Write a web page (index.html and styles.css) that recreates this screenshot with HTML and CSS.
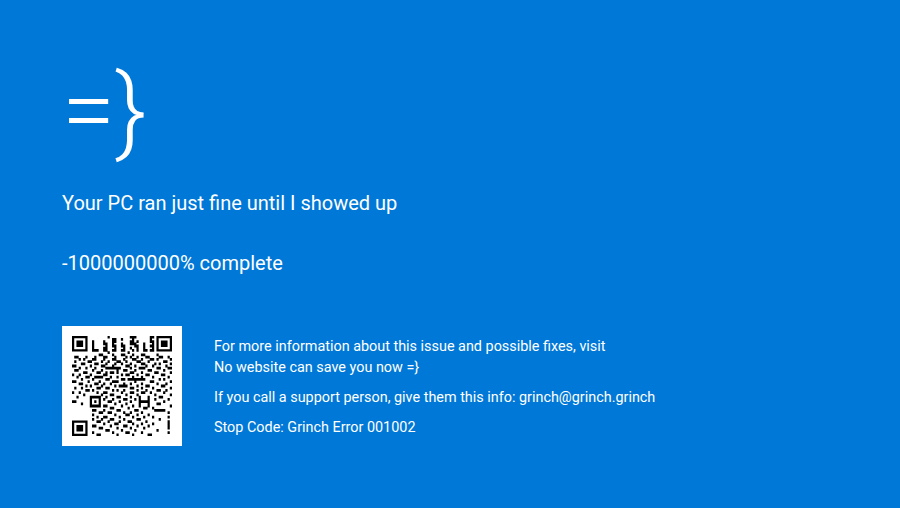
FILE: index.html
```html
<!DOCTYPE html>
<html lang="en">
<head>
    <meta charset="UTF-8">
    <meta name="viewport" content="width=device-width, initial-scale=1.0">
    <title>Grinch Error</title>
    <link rel="stylesheet" href="styles.css">
</head>
<body>
    <main class="screen">
        <div class="logo">=}</div>
        <p class="lead">Your PC ran just fine until I showed up</p>
        <p class="lead progress">-1000000000% complete</p>

        <div class="details">
            <div class="qr">
                <svg viewBox="0 0 45 45" width="100" height="100">
                    <path class="qr-finder" d="M.5 .5h6v6h-6zM38.5 .5h6v6h-6zM.5 38.5h6v6h-6z"/>
                    <path class="qr-eye" d="M2 2h3v3h-3zM40 2h3v3h-3zM2 40h3v3h-3z"/>
                    <path class="qr-data" d="
                        M16 .5h1M26 .5h3M35 .5h2
                        M18 1.5h2M22 1.5h1M27 1.5h1M35 1.5h1
                        M9 2.5h1M14 2.5h1M18 2.5h2M26 2.5h2M29 2.5h1M35 2.5h2
                        M9 3.5h1M14 3.5h2M18 3.5h1M22 3.5h1M26 3.5h3M32 3.5h1M36 3.5h1
                        M9 4.5h1M15 4.5h1M18 4.5h2M22 4.5h2M28 4.5h2M32 4.5h1M35 4.5h2
                        M9 5.5h1M14 5.5h2M19 5.5h1M23 5.5h1M26 5.5h1M29 5.5h1M32 5.5h1M36 5.5h1
                        M9 6.5h3M14 6.5h2M18 6.5h2M22 6.5h2M27 6.5h1M29 6.5h1M32 6.5h2M35 6.5h2
                        M16 7.5h1M25 7.5h1
                        M12 8.5h2M18 8.5h1M22 8.5h2M27 8.5h1M31 8.5h2M38 8.5h1
                        M1 9.5h2M6 9.5h1M10 9.5h1M14 9.5h2M19 9.5h1M24 9.5h1M26 9.5h1M29 9.5h1M33 9.5h2M39 9.5h2M43 9.5h1
                        M3 10.5h1M5 10.5h1M9 10.5h2M14 10.5h1M18 10.5h2M23 10.5h1M27 10.5h2M31 10.5h1M35 10.5h2M38 10.5h1M44 10.5h1
                        M1 11.5h1M7 11.5h2M13 11.5h1M16 11.5h1M20 11.5h2M24 11.5h1M29 11.5h2M34 11.5h1M41 11.5h2
                        M4 12.5h2M10 12.5h2M15 12.5h1M19 12.5h1M22 12.5h1M26 12.5h1M31 12.5h2M37 12.5h1M39 12.5h1M44 12.5h1
                        M0 13.5h2M8 13.5h1M13 13.5h2M18 13.5h1M24 13.5h2M28 13.5h1M33 13.5h1M36 13.5h1M42 13.5h1
                        M3 14.5h1M6 14.5h1M10 14.5h1M15 14.5h7M26 14.5h1M30 14.5h3M38 14.5h2M43 14.5h2
                        M1 15.5h2M9 15.5h1M13 15.5h1M20 15.5h1M23 15.5h2M28 15.5h1M34 15.5h2M41 15.5h1
                        M5 16.5h2M11 16.5h2M15 16.5h1M17 16.5h2M20 16.5h1M26 16.5h2M31 16.5h1M37 16.5h2M44 16.5h1
                        M0 17.5h1M3 17.5h1M8 17.5h1M14 17.5h2M22 17.5h1M24 17.5h2M29 17.5h1M33 17.5h2M40 17.5h2
                        M2 18.5h1M6 18.5h2M10 18.5h4M17 18.5h1M20 18.5h1M27 18.5h1M31 18.5h1M36 18.5h1M43 18.5h1
                        M4 19.5h1M9 19.5h1M15 19.5h2M22 19.5h2M25 19.5h8M39 19.5h1M41 19.5h1
                        M0 20.5h2M7 20.5h1M12 20.5h1M18 20.5h3M28 20.5h1M35 20.5h2M44 20.5h1
                        M3 21.5h2M10 21.5h2M14 21.5h1M17 21.5h1M23 21.5h1M26 21.5h1M31 21.5h1M38 21.5h1M42 21.5h1
                        M6 22.5h1M8 22.5h1M13 22.5h1M19 22.5h1M21 22.5h4M29 22.5h1M33 22.5h2M40 22.5h2
                        M1 23.5h1M4 23.5h1M11 23.5h2M15 23.5h2M26 23.5h2M31 23.5h1M36 23.5h1M44 23.5h1
                        M6 24.5h2M9 24.5h1M18 24.5h1M20 24.5h1M23 24.5h1M29 24.5h1M33 24.5h1M38 24.5h2M42 24.5h1
                        M0 25.5h1M3 25.5h1M11 25.5h1M14 25.5h2M22 25.5h1M26 25.5h2M31 25.5h2M35 25.5h1M41 25.5h1
                        M5 26.5h1M13 26.5h1M17 26.5h2M24 26.5h1M29 26.5h1M37 26.5h1M44 26.5h1
                        M2 27.5h1M8 27.5h5M15 27.5h1M20 27.5h2M26 27.5h1M30 27.5h1M34 27.5h1M39 27.5h2
                        M8 28.5h1M12 28.5h1M14 28.5h1M18 28.5h1M23 28.5h2M28 28.5h1M30 28.5h1M34 28.5h1M37 28.5h1M43 28.5h1
                        M0 29.5h2M8 29.5h1M10 29.5h1M12 29.5h1M16 29.5h2M21 29.5h1M26 29.5h1M30 29.5h5M41 29.5h1
                        M4 30.5h1M8 30.5h1M12 30.5h1M19 30.5h1M24 30.5h1M30 30.5h1M34 30.5h1M38 30.5h2
                        M8 31.5h5M14 31.5h2M22 31.5h1M27 31.5h1M30 31.5h1M34 31.5h1M44 31.5h1
                        M17 32.5h2M25 32.5h1M32 32.5h2M36 32.5h1
                        M9 33.5h2M14 33.5h1M20 33.5h2M28 33.5h2M37 33.5h5
                        M12 34.5h2M16 34.5h2M23 34.5h1M26 34.5h1M31 34.5h1M43 34.5h1
                        M9 35.5h1M19 35.5h1M24 35.5h2M29 35.5h1M34 35.5h1
                        M11 36.5h1M14 36.5h2M21 36.5h1M27 36.5h1M32 36.5h1M36 36.5h1M43 36.5h1
                        M9 37.5h1M13 37.5h1M17 37.5h2M23 37.5h1M29 37.5h2M39 37.5h1
                        M11 38.5h2M16 38.5h1M21 38.5h1M25 38.5h2M33 38.5h1M43 38.5h1
                        M14 39.5h1M19 39.5h2M27 39.5h1M31 39.5h1M36 39.5h1M43 39.5h1
                        M9 40.5h2M17 40.5h1M23 40.5h2M29 40.5h1M34 40.5h1M43 40.5h1
                        M12 41.5h2M20 41.5h1M26 41.5h1M32 41.5h1M43 41.5h1
                        M15 42.5h2M22 42.5h1M28 42.5h1M38 42.5h1
                        M9 43.5h1M18 43.5h1M24 43.5h2M31 43.5h1M43 43.5h1
                        M11 44.5h2M20 44.5h1M27 44.5h1M34 44.5h2"/>
                </svg>
            </div>
            <div class="info">
                <p>For more information about this issue and possible fixes, visit<br>No website can save you now =}</p>
                <p>If you call a support person, give them this info: grinch@grinch.grinch</p>
                <p>Stop Code: Grinch Error 001002</p>
            </div>
        </div>
    </main>
</body>
</html>
```

FILE: styles.css
```css
body, html {
    margin: 0;
    padding: 0;
    height: 100%;
}

body {
    background-color: #0078d7;
    color: #fff;
    font-family: Roboto, sans-serif;
    overflow: hidden;
}

.screen {
    padding: 54px 62px 0;
}

.logo {
    font-size: 96px;
    font-weight: 300;
    line-height: 112px;
}

.lead {
    margin: 22px 0 0;
    font-size: 20px;
    line-height: 30px;
}

.progress {
    margin-top: 30px;
}

.details {
    display: flex;
    align-items: center;
    gap: 32px;
    margin-top: 48px;
}

.qr {
    flex: none;
    width: 100px;
    height: 100px;
    padding: 10px;
    background-color: #fff;
}

.qr svg {
    display: block;
    filter: blur(.45px);
}

.qr-finder {
    fill: none;
    stroke: #000;
}

.qr-eye {
    fill: #000;
}

.qr-data {
    fill: none;
    stroke: #000;
    stroke-width: 1.25;
}

.info {
    padding-top: 2px;
    font-size: 14.4px;
    line-height: 21px;
}

.info p {
    margin: 0 0 9px;
}

.info p:last-child {
    margin-bottom: 0;
}
```
